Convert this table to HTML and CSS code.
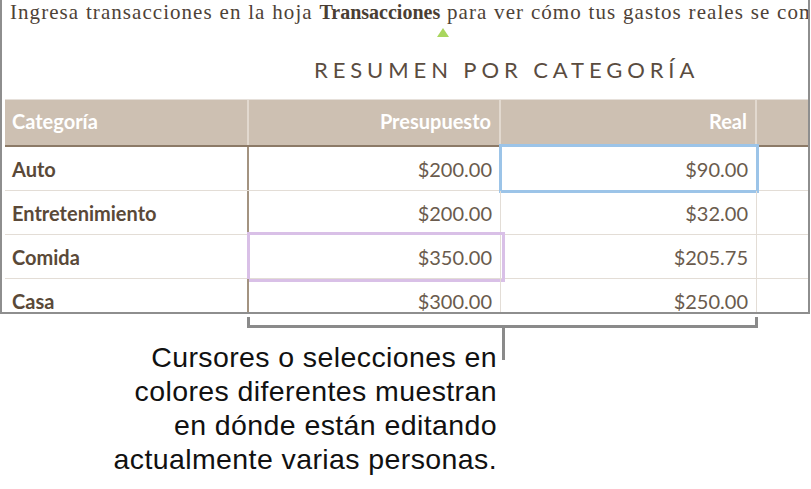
FILE: index.html
```html
<!DOCTYPE html>
<html lang="es">
<head>
<meta charset="utf-8">
<link rel="stylesheet" href="styles.css">
</head>
<body>
<div class="frame">
  <p class="intro">Ingresa transacciones en la hoja <b>Transacciones</b> para ver cómo tus gastos reales se comparan con tu presupuesto.</p>
  <div class="caret-row"><span class="caret"></span></div>
  <h1 class="title">RESUMEN POR CATEGORÍA</h1>
  <div class="table">
    <div class="row head">
      <div class="cell c1">Categoría</div>
      <div class="cell c2">Presupuesto</div>
      <div class="cell c3">Real</div>
      <div class="cell c4"></div>
    </div>
    <div class="row">
      <div class="cell c1">Auto</div>
      <div class="cell c2">$200.00</div>
      <div class="cell c3 sel-blue">$90.00</div>
      <div class="cell c4"></div>
    </div>
    <div class="row">
      <div class="cell c1">Entretenimiento</div>
      <div class="cell c2">$200.00</div>
      <div class="cell c3">$32.00</div>
      <div class="cell c4"></div>
    </div>
    <div class="row">
      <div class="cell c1">Comida</div>
      <div class="cell c2 sel-purple">$350.00</div>
      <div class="cell c3">$205.75</div>
      <div class="cell c4"></div>
    </div>
    <div class="row">
      <div class="cell c1">Casa</div>
      <div class="cell c2">$300.00</div>
      <div class="cell c3">$250.00</div>
      <div class="cell c4"></div>
    </div>
  </div>
</div>
<div class="callout">
  <div class="bracket">
    <div class="bracket-bar"></div>
    <div class="stem"></div>
  </div>
  <p class="note">Cursores o selecciones en<br>colores diferentes muestran<br>en dónde están editando<br>actualmente varias personas.</p>
</div>
</body>
</html>
```

FILE: styles.css
```css
html, body {
  margin: 0;
  padding: 0;
  background: #ffffff;
}

body {
  width: 811px;
  height: 489px;
  overflow: hidden;
}

.frame {
  width: 806px;
  height: 312px;
  border-left: 2px solid #8e8e8e;
  border-right: 2px solid #8e8e8e;
  border-bottom: 2px solid #8e8e8e;
  overflow: hidden;
  display: flex;
  flex-direction: column;
}

.intro {
  margin: 0;
  padding: 0 0 0 8px;
  height: 24px;
  flex: none;
  white-space: nowrap;
  font-family: "Liberation Serif", serif;
  font-size: 21px;
  line-height: 24px;
  letter-spacing: 1.05px;
  word-spacing: 0.5px;
  color: #4e4237;
}

.intro b {
  font-weight: bold;
  font-size: 20px;
  letter-spacing: 0;
  color: #4a3e33;
}

.caret-row {
  height: 13px;
  flex: none;
  padding-left: 435px;
  display: flex;
  align-items: flex-end;
}

.caret {
  width: 0;
  height: 0;
  border-left: 6px solid transparent;
  border-right: 6px solid transparent;
  border-bottom: 9px solid #a9d65e;
}

.title {
  margin: 0;
  height: 62px;
  flex: none;
  padding-left: 312px;
  box-sizing: border-box;
  padding-top: 18px;
  font-family: "Lato", sans-serif;
  font-weight: 400;
  font-size: 22px;
  line-height: 30px;
  letter-spacing: 4.9px;
  color: #5a4c3f;
  white-space: nowrap;
}

.table {
  margin-left: 3px;
  display: flex;
  flex-direction: column;
  flex: none;
  border-top: 1px solid #e6e0da;
  font-family: "Lato", sans-serif;
  font-size: 20px;
}

.row {
  display: flex;
  height: 44px;
  box-sizing: border-box;
  border-bottom: 1px solid #e3ddd6;
}

.row.head {
  height: 47px;
  background: #cdc0b2;
  border-bottom: 2px solid #8c7a67;
  color: #ffffff;
  font-weight: 700;
}

.cell {
  box-sizing: border-box;
  display: flex;
  align-items: center;
  padding: 0 8px;
  position: relative;
  color: #6a5b4d;
  white-space: nowrap;
}

.head .cell {
  color: #ffffff;
  border-right: 2px solid #e2d9cf;
  padding-bottom: 3px;
}

.c1 {
  width: 244px;
  padding-left: 7px;
  font-weight: 700;
  color: #5a4938;
  border-right: 2px solid #a39381;
}

.c2, .c3 {
  justify-content: flex-end;
}

.c2 {
  width: 252px;
  border-right: 1px solid #e3ddd6;
}

.c3 {
  width: 256px;
  border-right: 1px solid #e3ddd6;
}

.c4 {
  flex: 1;
}

.head .c4 {
  border-right: none;
}

.sel-blue::after,
.sel-purple::after {
  content: "";
  position: absolute;
  top: -3px;
  bottom: -3px;
  left: -2px;
  right: -3px;
  border: 3px solid #9cc4e8;
}

.sel-purple::after {
  border-color: #d9c0e7;
  left: -2px;
  right: -5px;
  bottom: -4px;
}

.callout {
  position: relative;
  height: 175px;
}

.bracket {
  margin-left: 247px;
  margin-top: 3px;
  width: 511px;
}

.bracket-bar {
  border-left: 3px solid #8a8a8a;
  border-right: 3px solid #8a8a8a;
  border-bottom: 3px solid #8a8a8a;
  box-sizing: border-box;
  height: 11px;
}

.stem {
  margin-left: 255px;
  width: 3px;
  height: 32px;
  background: #8a8a8a;
}

.note {
  position: absolute;
  top: 23px;
  left: 0;
  width: 497px;
  margin: 0;
  text-align: right;
  font-family: "Liberation Sans", sans-serif;
  font-size: 28.5px;
  letter-spacing: 0.4px;
  line-height: 34px;
  color: #111111;
}
```
